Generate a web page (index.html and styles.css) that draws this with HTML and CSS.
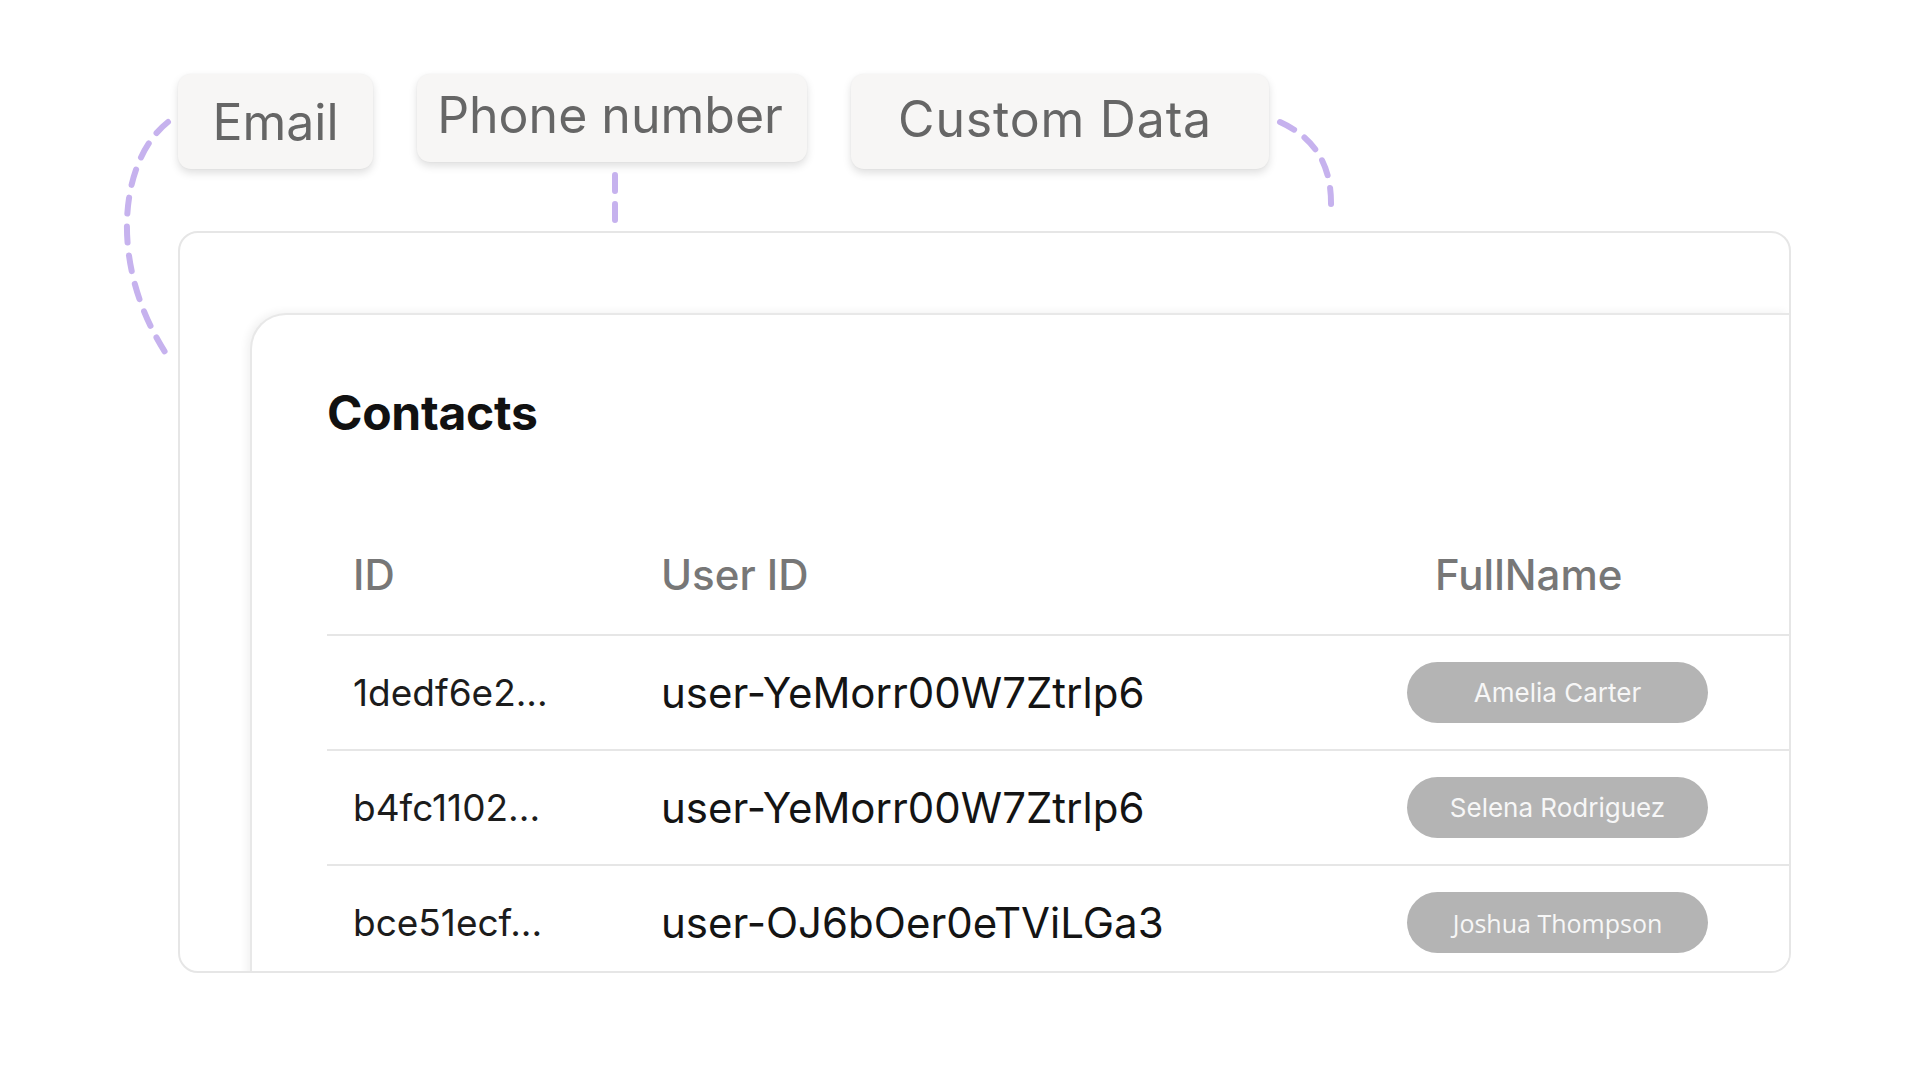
FILE: index.html
```html
<!DOCTYPE html>
<html lang="en">
<head>
<meta charset="utf-8">
<title>Contacts</title>
<link rel="stylesheet" href="styles.css">
</head>
<body>
<div class="stage">
  <svg class="connectors" width="1920" height="1080" viewBox="0 0 1920 1080" aria-hidden="true">
    <path d="M168 122 C 120 160, 108 262, 165 352" />
    <path d="M615 175 L615 222" />
    <path d="M1280 122 C 1315 138, 1332 165, 1331 207" />
  </svg>

  <div class="chips">
    <div class="chip chip-email"><span class="chip-label">Email</span></div>
    <div class="chip chip-phone"><span class="chip-label">Phone number</span></div>
    <div class="chip chip-custom"><span class="chip-label">Custom Data</span></div>
  </div>

  <div class="card-outer">
    <div class="card-inner">
      <h1 class="title">Contacts</h1>
      <div class="table">
        <div class="row row-head">
          <div class="cell cell-id">ID</div>
          <div class="cell cell-user">User ID</div>
          <div class="cell cell-name head-name">FullName</div>
        </div>
        <div class="row">
          <div class="cell cell-id">1dedf6e2...</div>
          <div class="cell cell-user">user-YeMorr00W7Ztrlp6</div>
          <div class="cell cell-name"><span class="pill">Amelia Carter</span></div>
        </div>
        <div class="row">
          <div class="cell cell-id">b4fc1102...</div>
          <div class="cell cell-user">user-YeMorr00W7Ztrlp6</div>
          <div class="cell cell-name"><span class="pill">Selena Rodriguez</span></div>
        </div>
        <div class="row">
          <div class="cell cell-id">bce51ecf...</div>
          <div class="cell cell-user">user-OJ6bOer0eTViLGa3</div>
          <div class="cell cell-name"><span class="pill pill-alt">Joshua Thompson</span></div>
        </div>
      </div>
    </div>
  </div>
</div>
</body>
</html>
```

FILE: styles.css
```css
* { box-sizing: border-box; }

html, body {
  margin: 0;
  padding: 0;
  background: #ffffff;
}

body {
  font-family: Inter, "Noto Sans", "Liberation Sans", sans-serif;
  width: 1920px;
  height: 1080px;
  overflow: hidden;
}

.stage {
  position: relative;
  width: 1920px;
  height: 1080px;
  padding-top: 74px;
  padding-left: 178px;
}

.connectors {
  position: absolute;
  left: 0;
  top: 0;
  pointer-events: none;
  z-index: 2;
}

.connectors path {
  fill: none;
  stroke: #c6b2ee;
  stroke-width: 6;
  stroke-linecap: round;
  stroke-dasharray: 16 13;
}

/* chips */
.chips {
  display: flex;
  align-items: flex-start;
  gap: 44px;
}

.chip {
  background: #f7f6f5;
  border-radius: 13px;
  box-shadow: 0 4px 8px rgba(0, 0, 0, 0.13), 0 0 2px rgba(0, 0, 0, 0.05);
  display: flex;
  justify-content: center;
  color: #666666;
  font-size: 50px;
  font-weight: 400;
  line-height: 60px;
}

.chip-email {
  width: 195px;
  height: 95px;
  padding-top: 18px;
}

.chip-phone {
  width: 390px;
  height: 88px;
  padding-top: 11px;
  padding-right: 4px;
}

.chip-custom {
  width: 418px;
  height: 95px;
  padding-top: 15px;
  padding-right: 10px;
}

.chip-custom .chip-label {
  letter-spacing: 0.8px;
}

/* cards */
.card-outer {
  margin-top: 62px;
  width: 1613px;
  height: 742px;
  border: 2px solid #e6e6e6;
  border-radius: 20px;
  overflow: hidden;
  padding: 80px 0 0 70px;
}

.card-inner {
  height: 800px;
  border: 2px solid #e8e8e8;
  border-right: none;
  border-bottom: none;
  border-top-left-radius: 36px;
  box-shadow: -3px -1px 8px rgba(0, 0, 0, 0.06);
  padding: 69px 0 0 75px;
  background: #ffffff;
}

.title {
  margin: 0;
  font-size: 48px;
  font-weight: 700;
  line-height: 58px;
  color: #111111;
  letter-spacing: -0.3px;
}

.table {
  margin-top: 73px;
}

.row {
  display: grid;
  grid-template-columns: 334px 746px 301px;
  align-items: center;
  height: 115px;
  border-bottom: 2px solid #e6e6e6;
}

.row-head {
  height: 121px;
}

.cell {
  white-space: nowrap;
}

.cell-id {
  padding-left: 26px;
  font-size: 37px;
  color: #1c1c1c;
}

.cell-user {
  font-size: 42px;
  color: #141414;
}

.row-head .cell {
  font-size: 42px;
  color: #777777;
  font-weight: 500;
}

.head-name {
  padding-left: 28px;
}

.cell-name {
  display: flex;
}

.pill {
  display: flex;
  align-items: center;
  justify-content: center;
  width: 301px;
  height: 61px;
  border-radius: 31px;
  background: #b4b4b4;
  color: #f7f7f7;
  font-size: 26px;
  font-weight: 400;
}

.pill-alt {
  font-family: "Open Sans", "Noto Sans", sans-serif;
  font-size: 25px;
}
```
